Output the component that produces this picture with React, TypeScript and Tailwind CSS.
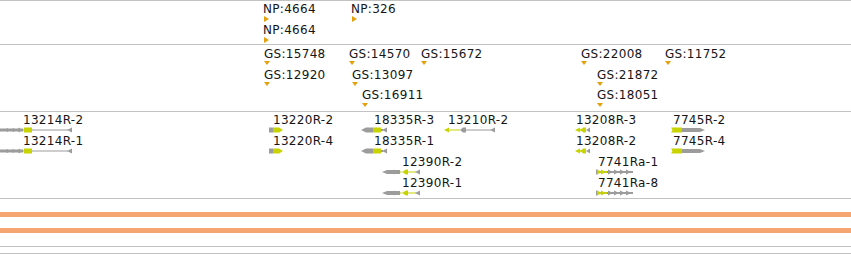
import React from "react";

const LIME = "#c8d400";
const GREY = "#9c9c9c";
const GOLD = "#e5a00d";

type Marker = { x: number; row: number; label: string };

const NP_FEATURES: Marker[] = [
  { x: 263, row: 0, label: "NP:4664" },
  { x: 263, row: 1, label: "NP:4664" },
  { x: 351, row: 0, label: "NP:326" },
];

const GS_FEATURES: Marker[] = [
  { x: 264, row: 0, label: "GS:15748" },
  { x: 264, row: 1, label: "GS:12920" },
  { x: 349, row: 0, label: "GS:14570" },
  { x: 352, row: 1, label: "GS:13097" },
  { x: 362, row: 2, label: "GS:16911" },
  { x: 421, row: 0, label: "GS:15672" },
  { x: 581, row: 0, label: "GS:22008" },
  { x: 597, row: 1, label: "GS:21872" },
  { x: 597, row: 2, label: "GS:18051" },
  { x: 665, row: 0, label: "GS:11752" },
];

const GS_TEXT_TOP = [2, 23, 43];
const GS_TRI_TOP = [16, 37, 58];

// gene glyphs, drawn in a 6px tall box
function Glyph13214() {
  return (
    <svg width="73" height="6" viewBox="0 0 73 6">
      <rect x="0" y="1.5" width="23" height="3" fill={GREY} />
      <polygon points="4,3 8,1 8,5" fill={GREY} />
      <polygon points="10,3 14,1 14,5" fill={GREY} />
      <polygon points="16,3 20,0.5 20,5.5" fill={GREY} />
      <rect x="24" y="0.5" width="8" height="5" fill={LIME} />
      <rect x="23" y="2.5" width="1" height="1" fill={GREY} />
      <rect x="32" y="2.5" width="36" height="1" fill={GREY} />
      <polygon points="67,3 72,0.5 72,5.5" fill={GREY} />
    </svg>
  );
}

function Glyph13220() {
  return (
    <svg width="15" height="6" viewBox="0 0 15 6">
      <rect x="0" y="0.5" width="4" height="5" fill={GREY} />
      <polygon points="4,0.5 10,0.5 14,3 10,5.5 4,5.5" fill={LIME} />
    </svg>
  );
}

function Glyph18335() {
  return (
    <svg width="27" height="6" viewBox="0 0 27 6">
      <polygon points="0,3 5,0.5 12,0.5 12,5.5 5,5.5" fill={GREY} />
      <rect x="12" y="0.5" width="8" height="5" fill={LIME} />
      <rect x="20" y="2" width="2" height="2" fill={GREY} />
      <polygon points="21,3 26,0.5 26,5.5" fill={GREY} />
    </svg>
  );
}

function Glyph13210() {
  return (
    <svg width="52" height="6" viewBox="0 0 52 6">
      <polygon points="0,3 5,0.5 5,5.5" fill={LIME} />
      <rect x="5" y="2.5" width="11" height="1" fill={LIME} />
      <polygon points="16,3 19,0.5 22,0.5 22,5.5 19,5.5" fill={GREY} />
      <rect x="22" y="2.5" width="25" height="1" fill={GREY} />
      <polygon points="46,3 51,0.5 51,5.5" fill={GREY} />
    </svg>
  );
}

function Glyph12390() {
  return (
    <svg width="40" height="6" viewBox="0 0 40 6">
      <polygon points="0,3 5,1 18,1 18,5 5,5" fill={GREY} />
      <polygon points="9,3 13,0.5 13,5.5" fill={GREY} />
      <rect x="18" y="2.5" width="2" height="1" fill={LIME} />
      <polygon points="20,3 24,0.5 26,0.5 26,5.5 24,5.5" fill={LIME} />
      <rect x="26" y="2.5" width="8" height="1" fill={LIME} />
      <polygon points="33,3 38,0.5 38,5.5" fill={GREY} />
    </svg>
  );
}

function Glyph13208() {
  return (
    <svg width="16" height="6" viewBox="0 0 16 6">
      <polygon points="0,3 5,0.5 5,5.5" fill={LIME} />
      <polygon points="4,3 9,0.5 9,5.5" fill={LIME} />
      <rect x="8" y="0.5" width="3" height="5" fill={LIME} />
      <polygon points="11,3 15,0.5 15,5.5" fill={GREY} />
    </svg>
  );
}

function Glyph7745() {
  return (
    <svg width="35" height="6" viewBox="0 0 35 6">
      <polygon points="0,0.5 11,0.5 11,5.5 0,5.5 1.5,3" fill={LIME} />
      <polygon points="11,1 29,1 34,3 29,5 11,5" fill={GREY} />
    </svg>
  );
}

function Glyph7741() {
  return (
    <svg width="38" height="6" viewBox="0 0 38 6">
      <rect x="0" y="0.5" width="1.5" height="5" fill={GREY} />
      <rect x="0" y="2" width="37" height="2" fill={GREY} />
      <polygon points="1,0.5 6,3 1,5.5" fill={LIME} />
      <polygon points="5,0.5 10,3 5,5.5" fill={LIME} />
      <rect x="9" y="2" width="2" height="2" fill={LIME} />
      <polygon points="12,0.5 17,3 12,5.5" fill={GREY} />
      <polygon points="18,0.5 23,3 18,5.5" fill={GREY} />
      <polygon points="24,0.5 29,3 24,5.5" fill={GREY} />
      <polygon points="30,0.5 35,3 30,5.5" fill={GREY} />
    </svg>
  );
}

type Gene = { label: string; labelX: number; glyphX: number; row: number; Glyph: () => React.ReactElement };

const GENES: Gene[] = [
  { label: "13214R-2", labelX: 23, glyphX: 0, row: 0, Glyph: Glyph13214 },
  { label: "13214R-1", labelX: 23, glyphX: 0, row: 1, Glyph: Glyph13214 },
  { label: "13220R-2", labelX: 273, glyphX: 269, row: 0, Glyph: Glyph13220 },
  { label: "13220R-4", labelX: 273, glyphX: 269, row: 1, Glyph: Glyph13220 },
  { label: "18335R-3", labelX: 374, glyphX: 361, row: 0, Glyph: Glyph18335 },
  { label: "18335R-1", labelX: 374, glyphX: 361, row: 1, Glyph: Glyph18335 },
  { label: "13210R-2", labelX: 448, glyphX: 444, row: 0, Glyph: Glyph13210 },
  { label: "12390R-2", labelX: 402, glyphX: 382, row: 2, Glyph: Glyph12390 },
  { label: "12390R-1", labelX: 402, glyphX: 382, row: 3, Glyph: Glyph12390 },
  { label: "13208R-3", labelX: 576, glyphX: 575, row: 0, Glyph: Glyph13208 },
  { label: "13208R-2", labelX: 576, glyphX: 575, row: 1, Glyph: Glyph13208 },
  { label: "7745R-2", labelX: 673, glyphX: 671, row: 0, Glyph: Glyph7745 },
  { label: "7745R-4", labelX: 673, glyphX: 671, row: 1, Glyph: Glyph7745 },
  { label: "7741Ra-1", labelX: 598, glyphX: 596, row: 2, Glyph: Glyph7741 },
  { label: "7741Ra-8", labelX: 598, glyphX: 596, row: 3, Glyph: Glyph7741 },
];

function Line() {
  return <div className="h-px bg-[#c2c2c2]" />;
}

export default function App() {
  return (
    <div className="w-[851px] h-[254px] overflow-hidden bg-white font-['DejaVu_Sans',sans-serif] text-[12px] leading-[14px] tracking-[0.3px] text-[#151515]">
      <Line />

      {/* NP track */}
      <div className="relative h-[43px]">
        {NP_FEATURES.map((f, i) => (
          <React.Fragment key={i}>
            <span className="absolute whitespace-nowrap" style={{ left: f.x, top: 1 + f.row * 21 }}>
              {f.label}
            </span>
            <svg className="absolute" width="6" height="6" viewBox="0 0 6 6" style={{ left: f.x + 1, top: 15 + f.row * 21 }}>
              <polygon points="0,0 5,3 0,6" fill={GOLD} />
            </svg>
          </React.Fragment>
        ))}
      </div>
      <Line />

      {/* GS track */}
      <div className="relative h-[66px]">
        {GS_FEATURES.map((f, i) => (
          <React.Fragment key={i}>
            <span className="absolute whitespace-nowrap" style={{ left: f.x, top: GS_TEXT_TOP[f.row] }}>
              {f.label}
            </span>
            <svg className="absolute" width="7" height="5" viewBox="0 0 7 5" style={{ left: f.x, top: GS_TRI_TOP[f.row] }}>
              <polygon points="0,0 6,0 3,4" fill={GOLD} />
            </svg>
          </React.Fragment>
        ))}
      </div>
      <Line />

      {/* gene models */}
      <div className="relative h-[86px]">
        {GENES.map((g, i) => (
          <React.Fragment key={i}>
            <span className="absolute whitespace-nowrap" style={{ left: g.labelX, top: 1 + g.row * 21 }}>
              {g.label}
            </span>
            <div className="absolute flex" style={{ left: g.glyphX, top: 15 + g.row * 21 }}>
              <g.Glyph />
            </div>
          </React.Fragment>
        ))}
      </div>
      <Line />

      <div className="h-[13px]" />
      <div className="h-[5px] bg-[#f5a571]" />
      <div className="h-[11px]" />
      <div className="h-[5px] bg-[#f5a571]" />
      <div className="h-[13px]" />
      <Line />
      <div className="h-[6px]" />
      <Line />
    </div>
  );
}
